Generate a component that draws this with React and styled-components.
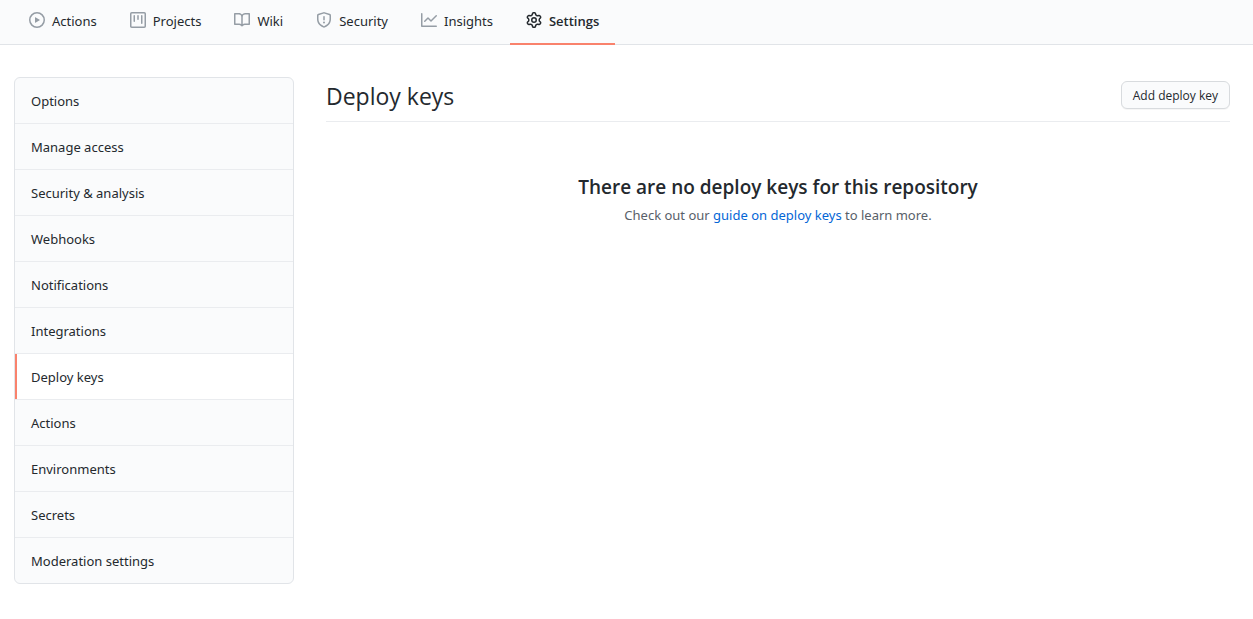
import React from "react";
import styled, { createGlobalStyle } from "styled-components";

const GlobalStyle = createGlobalStyle`
  *, *::before, *::after { box-sizing: border-box; }
  body {
    margin: 0;
    background: #ffffff;
    color: #24292e;
    font-family: "Noto Sans", "Open Sans", sans-serif;
    font-size: 13px;
    line-height: 21px;
  }
`;

const TabBar = styled.nav`
  display: flex;
  gap: 1px;
  height: 45px;
  padding: 0 13px;
  background: #fafbfc;
  border-bottom: 1px solid #e1e4e8;
`;

const Tab = styled.a`
  display: flex;
  align-items: center;
  gap: 7px;
  height: 45px;
  padding: 0 16px;
  border-bottom: 2px solid ${(p) => (p.$active ? "#f9826c" : "transparent")};
  color: #24292e;
  font-family: ${(p) => (p.$active ? '"Open Sans", sans-serif' : "inherit")};
  font-weight: ${(p) => (p.$active ? 600 : 400)};
  text-decoration: none;
  white-space: nowrap;
`;

const Icon = styled.svg`
  flex: none;
  width: 16px;
  height: 16px;
  margin-bottom: 3px;
  fill: ${(p) => (p.$active ? "#24292e" : "#959da5")};
`;

const Page = styled.div`
  display: flex;
  align-items: flex-start;
  gap: 32px;
  padding: 32px 23px 32px 14px;
`;

const Menu = styled.nav`
  flex: none;
  width: 280px;
  overflow: hidden;
  background: #fafbfc;
  border: 1px solid #e1e4e8;
  border-radius: 6px;
`;

const MenuItem = styled.a`
  display: block;
  padding: 13px 16px 11px;
  border-bottom: 1px solid #eaecef;
  background: ${(p) => (p.$active ? "#ffffff" : "transparent")};
  box-shadow: ${(p) => (p.$active ? "inset 2px 0 0 #f9826c" : "none")};
  color: #24292e;
  text-decoration: none;

  &:last-child { border-bottom: 0; }
`;

const Main = styled.main`
  flex: 1;
  min-width: 0;
`;

const Subhead = styled.header`
  display: flex;
  align-items: center;
  justify-content: space-between;
  height: 45px;
  padding-bottom: 8px;
  border-bottom: 1px solid #eaecef;
`;

const Title = styled.h1`
  margin: 0;
  padding-top: 2px;
  font-family: "Open Sans", sans-serif;
  font-size: 23px;
  font-weight: 400;
  line-height: 32px;
`;

const Button = styled.button`
  height: 28px;
  padding: 1px 11px 0;
  background: #fafbfc;
  border: 1px solid #d8dbde;
  border-radius: 6px;
  box-shadow: 0 1px 0 rgba(27, 31, 35, 0.04);
  color: #24292e;
  font-family: "Open Sans", sans-serif;
  font-size: 12px;
  font-weight: 400;
  line-height: 20px;
  cursor: pointer;
`;

const Blankslate = styled.section`
  padding: 50px 32px;
  text-align: center;
`;

const BlankTitle = styled.h2`
  margin: 0;
  font-family: "Open Sans", sans-serif;
  font-size: 19px;
  font-weight: 600;
  line-height: 30px;
`;

const BlankText = styled.p`
  margin: 3px 0 0;
  color: #586069;
`;

const Link = styled.a`
  color: #0366d6;
  text-decoration: none;
`;

const tabs = [
  {
    label: "Actions",
    path: "M1.5 8a6.5 6.5 0 1113 0 6.5 6.5 0 01-13 0zM8 0a8 8 0 100 16A8 8 0 008 0zM6.379 5.227A.25.25 0 006 5.442v5.117a.25.25 0 00.379.214l4.264-2.559a.25.25 0 000-.428L6.379 5.227z",
  },
  {
    label: "Projects",
    path: "M1.75 0A1.75 1.75 0 000 1.75v12.5C0 15.216.784 16 1.75 16h12.5A1.75 1.75 0 0016 14.25V1.75A1.75 1.75 0 0014.25 0H1.75zM1.5 1.75a.25.25 0 01.25-.25h12.5a.25.25 0 01.25.25v12.5a.25.25 0 01-.25.25H1.75a.25.25 0 01-.25-.25V1.75zM11.75 3a.75.75 0 00-.75.75v7.5a.75.75 0 001.5 0v-7.5a.75.75 0 00-.75-.75zm-8.25.75a.75.75 0 011.5 0v5.5a.75.75 0 01-1.5 0v-5.5zM8 3a.75.75 0 00-.75.75v3.5a.75.75 0 001.5 0v-3.5A.75.75 0 008 3z",
  },
  {
    label: "Wiki",
    path: "M0 1.75A.75.75 0 01.75 1h4.253c1.227 0 2.317.59 3 1.501A3.744 3.744 0 0111.006 1h4.245a.75.75 0 01.75.75v10.5a.75.75 0 01-.75.75h-4.507a2.25 2.25 0 00-1.591.659l-.622.621a.75.75 0 01-1.06 0l-.622-.621A2.25 2.25 0 005.258 13H.75a.75.75 0 01-.75-.75V1.75zm8.755 3a2.25 2.25 0 012.25-2.25H14.5v9h-3.757c-.71 0-1.4.201-1.992.572l.004-7.322zm-1.504 7.324l.004-5.073-.002-2.253A2.25 2.25 0 005.003 2.5H1.5v9h3.757a3.75 3.75 0 011.994.574z",
  },
  {
    label: "Security",
    path: "M7.467.133a1.75 1.75 0 011.066 0l5.25 1.68A1.75 1.75 0 0115 3.48V7c0 1.566-.32 3.182-1.303 4.682-.983 1.498-2.585 2.813-5.032 3.855a1.7 1.7 0 01-1.33 0c-2.447-1.042-4.049-2.357-5.032-3.855C1.32 10.182 1 8.566 1 7V3.48a1.75 1.75 0 011.217-1.667l5.25-1.68zm.61 1.429a.25.25 0 00-.153 0l-5.25 1.68a.25.25 0 00-.174.238V7c0 1.358.275 2.666 1.057 3.86.784 1.194 2.121 2.34 4.366 3.297a.2.2 0 00.154 0c2.245-.956 3.582-2.104 4.366-3.298C13.225 9.666 13.5 8.36 13.5 7V3.48a.25.25 0 00-.174-.237l-5.25-1.68zM9 10.5a1 1 0 11-2 0 1 1 0 012 0zm-.25-5.75a.75.75 0 10-1.5 0v3a.75.75 0 001.5 0v-3z",
  },
  {
    label: "Insights",
    path: "M1.5 1.75a.75.75 0 00-1.5 0v12.5c0 .414.336.75.75.75h14.5a.75.75 0 000-1.5H1.5V1.75zm14.28 2.53a.75.75 0 00-1.06-1.06L10 7.94 7.53 5.47a.75.75 0 00-1.06 0L3.22 8.72a.75.75 0 001.06 1.06L7 7.06l2.47 2.47a.75.75 0 001.06 0l5.25-5.25z",
  },
  {
    label: "Settings",
    active: true,
    path: "M7.429 1.525a6.593 6.593 0 011.142 0c.036.003.108.036.137.146l.289 1.105c.147.56.55.967.997 1.189.174.086.341.183.501.29.417.278.97.423 1.53.27l1.102-.303c.11-.03.175.016.195.046.219.31.41.641.573.989.014.031.022.11-.059.19l-.815.806c-.411.406-.562.957-.53 1.456a4.588 4.588 0 010 .582c-.032.499.119 1.05.53 1.456l.815.806c.08.08.073.159.059.19a6.494 6.494 0 01-.573.99c-.02.029-.086.074-.195.045l-1.103-.303c-.559-.153-1.112-.008-1.529.27-.16.107-.327.204-.5.29-.449.222-.851.628-.998 1.189l-.289 1.105c-.029.11-.101.143-.137.146a6.613 6.613 0 01-1.142 0c-.036-.003-.108-.037-.137-.146l-.289-1.105c-.147-.56-.55-.967-.997-1.189a4.502 4.502 0 01-.501-.29c-.417-.278-.97-.423-1.53-.27l-1.102.303c-.11.03-.175-.016-.195-.046a6.492 6.492 0 01-.573-.989c-.014-.031-.022-.11.059-.19l.815-.806c.411-.406.562-.957.53-1.456a4.587 4.587 0 010-.582c.032-.499-.119-1.05-.53-1.456l-.815-.806c-.08-.08-.073-.159-.059-.19a6.44 6.44 0 01.573-.99c.02-.029.086-.075.195-.045l1.103.303c.559.153 1.112.008 1.529-.27.16-.107.327-.204.5-.29.449-.222.851-.628.998-1.189l.289-1.105c.029-.11.101-.143.137-.146zM8 0c-.236 0-.47.01-.701.03-.743.065-1.29.615-1.458 1.261l-.29 1.106c-.017.066-.078.158-.211.224a5.994 5.994 0 00-.668.386c-.123.082-.233.09-.3.071L3.27 2.776c-.644-.177-1.392.02-1.82.63a7.977 7.977 0 00-.704 1.217c-.315.675-.111 1.422.363 1.891l.815.806c.05.048.098.147.088.294a6.084 6.084 0 000 .772c.01.147-.038.246-.088.294l-.815.806c-.474.469-.678 1.216-.363 1.891.2.428.436.835.704 1.218.428.609 1.176.806 1.82.63l1.103-.303c.066-.019.176-.011.299.071.213.143.436.272.668.386.133.066.194.158.212.224l.289 1.106c.169.646.715 1.196 1.458 1.26a8.094 8.094 0 001.402 0c.743-.064 1.29-.614 1.458-1.26l.29-1.106c.017-.066.078-.158.211-.224a5.98 5.98 0 00.668-.386c.123-.082.233-.09.3-.071l1.102.302c.644.177 1.392-.02 1.82-.63.268-.382.505-.789.704-1.217.315-.675.111-1.422-.364-1.891l-.814-.806c-.05-.048-.098-.147-.088-.294a6.1 6.1 0 000-.772c-.01-.147.039-.246.088-.294l.814-.806c.475-.469.679-1.216.364-1.891a7.992 7.992 0 00-.704-1.218c-.428-.609-1.176-.806-1.82-.63l-1.103.303c-.066.019-.176.011-.299-.071a5.991 5.991 0 00-.668-.386c-.133-.066-.194-.158-.212-.224L10.16 1.29C9.99.645 9.444.095 8.701.031A8.094 8.094 0 008 0zm1.5 8a1.5 1.5 0 11-3 0 1.5 1.5 0 013 0zM11 8a3 3 0 11-6 0 3 3 0 016 0z",
  },
];

const menuItems = [
  "Options",
  "Manage access",
  "Security & analysis",
  "Webhooks",
  "Notifications",
  "Integrations",
  "Deploy keys",
  "Actions",
  "Environments",
  "Secrets",
  "Moderation settings",
];

export default function App() {
  return (
    <>
      <GlobalStyle />
      <TabBar>
        {tabs.map((tab) => (
          <Tab key={tab.label} href="#" $active={tab.active}>
            <Icon viewBox="0 0 16 16" aria-hidden="true" $active={tab.active}>
              <path fillRule="evenodd" d={tab.path} />
            </Icon>
            {tab.label}
          </Tab>
        ))}
      </TabBar>
      <Page>
        <Menu>
          {menuItems.map((item) => (
            <MenuItem key={item} href="#" $active={item === "Deploy keys"}>
              {item}
            </MenuItem>
          ))}
        </Menu>
        <Main>
          <Subhead>
            <Title>Deploy keys</Title>
            <Button type="button">Add deploy key</Button>
          </Subhead>
          <Blankslate>
            <BlankTitle>There are no deploy keys for this repository</BlankTitle>
            <BlankText>
              Check out our <Link href="#">guide on deploy keys</Link> to learn more.
            </BlankText>
          </Blankslate>
        </Main>
      </Page>
    </>
  );
}
